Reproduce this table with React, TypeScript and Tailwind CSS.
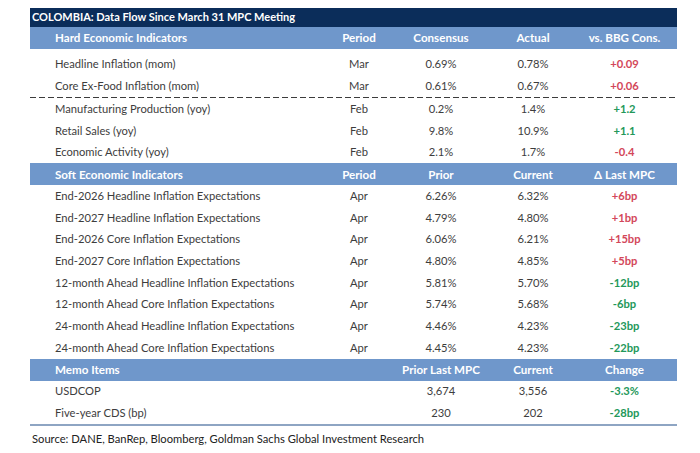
import React from 'react';

type Row = { label: string; period?: string; a: string; b: string; chg: string; up: boolean };

const hardTop: Row[] = [
    { label: 'Headline Inflation (mom)', period: 'Mar', a: '0.69%', b: '0.78%', chg: '+0.09', up: true },
    { label: 'Core Ex-Food Inflation (mom)', period: 'Mar', a: '0.61%', b: '0.67%', chg: '+0.06', up: true },
];

const hardBottom: Row[] = [
    { label: 'Manufacturing Production (yoy)', period: 'Feb', a: '0.2%', b: '1.4%', chg: '+1.2', up: false },
    { label: 'Retail Sales (yoy)', period: 'Feb', a: '9.8%', b: '10.9%', chg: '+1.1', up: false },
    { label: 'Economic Activity (yoy)', period: 'Feb', a: '2.1%', b: '1.7%', chg: '-0.4', up: true },
];

const soft: Row[] = [
    { label: 'End-2026 Headline Inflation Expectations', period: 'Apr', a: '6.26%', b: '6.32%', chg: '+6bp', up: true },
    { label: 'End-2027 Headline Inflation Expectations', period: 'Apr', a: '4.79%', b: '4.80%', chg: '+1bp', up: true },
    { label: 'End-2026 Core Inflation Expectations', period: 'Apr', a: '6.06%', b: '6.21%', chg: '+15bp', up: true },
    { label: 'End-2027 Core Inflation Expectations', period: 'Apr', a: '4.80%', b: '4.85%', chg: '+5bp', up: true },
    { label: '12-month Ahead Headline Inflation Expectations', period: 'Apr', a: '5.81%', b: '5.70%', chg: '-12bp', up: false },
    { label: '12-month Ahead Core Inflation Expectations', period: 'Apr', a: '5.74%', b: '5.68%', chg: '-6bp', up: false },
    { label: '24-month Ahead Headline Inflation Expectations', period: 'Apr', a: '4.46%', b: '4.23%', chg: '-23bp', up: false },
    { label: '24-month Ahead Core Inflation Expectations', period: 'Apr', a: '4.45%', b: '4.23%', chg: '-22bp', up: false },
];

const memo: Row[] = [
    { label: 'USDCOP', a: '3,674', b: '3,556', chg: '-3.3%', up: false },
    { label: 'Five-year CDS (bp)', a: '230', b: '202', chg: '-28bp', up: false },
];

const cols = 'grid grid-cols-[300px_58px_106px_78px_105px] items-center';

function Header({ cells }: { cells: string[] }) {
    return (
        <div className={`${cols} h-[22px] bg-[#6f97cb] text-white font-bold text-[11.6px]`}>
            <div className="pl-[25px]">{cells[0]}</div>
            <div className="text-center">{cells[1]}</div>
            <div className="text-center">{cells[2]}</div>
            <div className="text-center">{cells[3]}</div>
            <div className="text-center">{cells[4]}</div>
        </div>
    );
}

function DataRow({ row }: { row: Row }) {
    return (
        <div className={`${cols} h-[21.7px] text-[11.2px] text-[#3d3d3d]`}>
            <div className="pl-[25px]">{row.label}</div>
            <div className="text-center">{row.period ?? ''}</div>
            <div className="text-center">{row.a}</div>
            <div className="text-center">{row.b}</div>
            <div className={`text-center font-bold ${row.up ? 'text-[#d3475a]' : 'text-[#23985a]'}`}>{row.chg}</div>
        </div>
    );
}

export default function App() {
    return (
        <div className="w-[700px] h-[453px] bg-white pt-[8px] pl-[30px] font-['Lato',_'Open_Sans',_sans-serif]">
            <div className="w-[647px]">
                <div className="h-[19px] bg-[#0b2d5a] text-white font-bold text-[11px] flex items-center pl-[2px]">
                    COLOMBIA: Data Flow Since March 31 MPC Meeting
                </div>
                <Header cells={['Hard Economic Indicators', 'Period', 'Consensus', 'Actual', 'vs. BBG Cons.']} />
                <div className="pt-[5px]">
                    {hardTop.map((r) => <DataRow key={r.label} row={r} />)}
                </div>
                <div className="h-px bg-[repeating-linear-gradient(90deg,#3c3c3c_0px,#3c3c3c_6px,transparent_6px,transparent_9px)]" />
                {hardBottom.map((r) => <DataRow key={r.label} row={r} />)}
                <Header cells={['Soft Economic Indicators', 'Period', 'Prior', 'Current', '\u0394 Last MPC']} />
                {soft.map((r) => <DataRow key={r.label} row={r} />)}
                <Header cells={['Memo Items', '', 'Prior Last MPC', 'Current', 'Change']} />
                {memo.map((r) => <DataRow key={r.label} row={r} />)}
                <div className="h-[2px] bg-[#8ea5c3]" />
                <div className="pt-[5px] pl-[2px] text-[11.2px] text-[#222]">
                    Source: DANE, BanRep, Bloomberg, Goldman Sachs Global Investment Research
                </div>
            </div>
        </div>
    );
}
